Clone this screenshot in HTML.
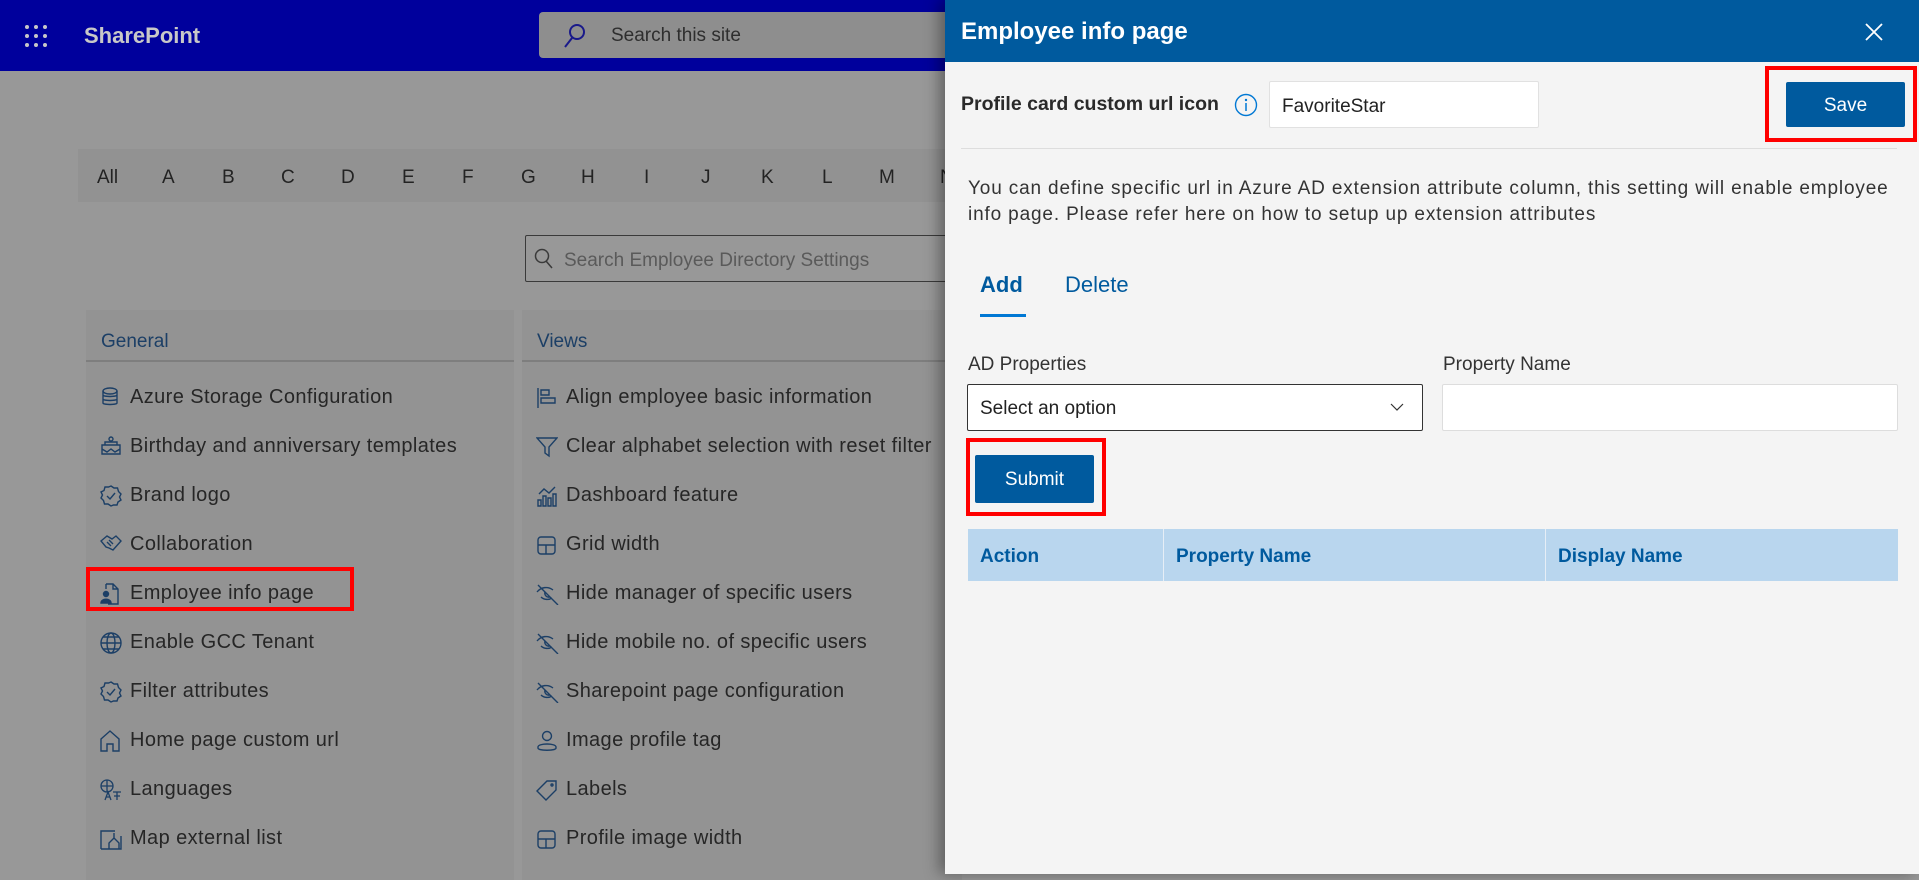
<!DOCTYPE html>
<html><head><meta charset="utf-8">
<style>
*{box-sizing:border-box;margin:0;padding:0}
body{width:1919px;height:874px;overflow:hidden;background:#989898;font-family:"Liberation Sans",sans-serif;position:relative}
.abs{position:absolute}
.top{left:0;top:0;width:1919px;height:71px;background:#00009c}
.sp{left:84px;top:23px;color:#c8c8c8;font-size:22px;font-weight:bold}
.srch{left:539px;top:12px;width:420px;height:46px;background:#8e8e8e;border-radius:4px}
.srch span{position:absolute;left:72px;top:13px;color:#2e2e2e;font-size:19px}
.alpha{left:78px;top:149px;width:880px;height:53px;background:#929292}
.alpha span{position:absolute;top:18px;font-size:19px;color:#232323}
.ss{left:525px;top:235px;width:430px;height:47px;border:1.5px solid #3a3a3a;border-radius:2px}
.ss span{position:absolute;left:38px;top:14px;font-size:19px;color:#5a5a5a}
.card{top:310px;height:570px;background:#939393}
.card h3{position:absolute;left:15px;top:21px;font-size:19px;color:#1c3f66;font-weight:normal}
.card .ul{position:absolute;left:0;right:0;top:50px;height:2px;background:#7e7e7e}
.item{position:absolute;font-size:20px;letter-spacing:0.4px;color:#262626;white-space:nowrap}
.item svg{position:absolute;left:-30px;top:1px}
.red{border:4px solid #f00}
.panel{left:945px;top:0;width:974px;height:874px;background:#f4f4f4;box-shadow:-6px 0 14px rgba(0,0,0,.35)}
.ph{left:0;top:0;width:974px;height:62px;background:#005a9e}
</style></head><body>
<div class="abs top"></div>
<svg class="abs" style="left:24px;top:24px" width="24" height="24"><g fill="#c8c8c8"><circle cx="3" cy="3" r="2"/><circle cx="12" cy="3" r="2"/><circle cx="21" cy="3" r="2"/><circle cx="3" cy="12" r="2"/><circle cx="12" cy="12" r="2"/><circle cx="21" cy="12" r="2"/><circle cx="3" cy="21" r="2"/><circle cx="12" cy="21" r="2"/><circle cx="21" cy="21" r="2"/></g></svg>
<div class="abs sp">SharePoint</div>
<div class="abs srch"><svg style="position:absolute;left:24px;top:11px" width="24" height="26"><circle cx="14" cy="9" r="7" fill="none" stroke="#1a1a8a" stroke-width="2"/><line x1="9" y1="15" x2="2" y2="24" stroke="#1a1a8a" stroke-width="2"/></svg><span>Search this site</span></div>

<div class="abs alpha">
<span style="left:19px">All</span><span style="left:84px">A</span><span style="left:144px">B</span><span style="left:203px">C</span><span style="left:263px">D</span><span style="left:324px">E</span><span style="left:384px">F</span><span style="left:443px">G</span><span style="left:503px">H</span><span style="left:566px">I</span><span style="left:623px">J</span><span style="left:683px">K</span><span style="left:744px">L</span><span style="left:801px">M</span><span style="left:862px">N</span>
</div>
<div class="abs ss"><svg style="position:absolute;left:8px;top:12px" width="20" height="22"><circle cx="8" cy="8" r="6.5" fill="none" stroke="#3a3a3a" stroke-width="1.5"/><line x1="12" y1="13" x2="18" y2="20" stroke="#3a3a3a" stroke-width="1.5"/></svg><span>Search Employee Directory Settings</span></div>

<div class="abs card" style="left:86px;width:428px"><h3>General</h3><div class="ul"></div></div>
<div class="abs card" style="left:522px;width:440px"><h3>Views</h3><div class="ul"></div></div>

<div class="abs red" style="left:86px;top:567px;width:268px;height:44px"></div>

<div class="abs" style="left:130px;top:386px">
<div class="item" style="top:0">Azure Storage Configuration<svg width="20" height="20"><g fill="none" stroke="#1c3f66" stroke-width="1.4"><ellipse cx="10" cy="4" rx="7" ry="3"/><path d="M3 4v12c0 2 14 2 14 0V4M3 8c0 2 14 2 14 0M3 12c0 2 14 2 14 0"/></g></svg></div>
<div class="item" style="top:49px">Birthday and anniversary templates<svg width="22" height="20"><g fill="none" stroke="#1c3f66" stroke-width="1.4"><circle cx="11" cy="3" r="2"/><path d="M2 18h18V9H2zM2 13l5 3 4-3 4 3 5-3M5 9V6h12v3"/></g></svg></div>
<div class="item" style="top:98px">Brand logo<svg width="22" height="22"><g fill="none" stroke="#1c3f66" stroke-width="1.4"><path d="M11 1l3 2 3.5 0 1 3.5 2.5 2.5-1.5 3 1.5 3-3 2-1 3-3.5 0L11 21l-3-2-3.5 0-1-3.5L1 13l1.5-3L1 7l3-1.5 1-3.5 3.5 0z"/><path d="M7 11l3 3 5-6"/></g></svg></div>
<div class="item" style="top:147px">Collaboration<svg width="22" height="20"><g fill="none" stroke="#1c3f66" stroke-width="1.4"><path d="M1 7l6-5 5 3 4-3 5 5-8 9-4-2-3-1z M7 8l4 4M9 6l4 4"/></g></svg></div>
<div class="item" style="top:196px">Employee info page<svg width="20" height="22"><g stroke="#1c3f66" stroke-width="1.4"><path fill="none" d="M6 1h7l5 5v15H8M13 1v5h5M6 1v5"/><circle cx="6" cy="11" r="2.5" fill="#1c3f66"/><path d="M1 20c0-5 10-5 10 0z" fill="#1c3f66"/></g></svg></div>
<div class="item" style="top:245px">Enable GCC Tenant<svg width="22" height="22"><g fill="none" stroke="#1c3f66" stroke-width="1.4"><circle cx="11" cy="11" r="10"/><ellipse cx="11" cy="11" rx="4" ry="10"/><path d="M1 11h20M3 5h16M3 17h16"/></g></svg></div>
<div class="item" style="top:294px">Filter attributes<svg width="22" height="22"><g fill="none" stroke="#1c3f66" stroke-width="1.4"><path d="M11 1l3 2 3.5 0 1 3.5 2.5 2.5-1.5 3 1.5 3-3 2-1 3-3.5 0L11 21l-3-2-3.5 0-1-3.5L1 13l1.5-3L1 7l3-1.5 1-3.5 3.5 0z"/><path d="M7 11l3 3 5-6"/></g></svg></div>
<div class="item" style="top:343px">Home page custom url<svg width="20" height="22"><path fill="none" stroke="#1c3f66" stroke-width="1.4" d="M1 9L10 1l9 8v12h-6v-7H7v7H1z"/></svg></div>
<div class="item" style="top:392px">Languages<svg width="22" height="22"><g fill="none" stroke="#1c3f66" stroke-width="1.3"><circle cx="7" cy="7" r="6"/><path d="M1 7h12M7 1v12M5 21l3-8 3 8M6 18h4M13 13h8M17 13v8M14 17h6"/></g></svg></div>
<div class="item" style="top:441px">Map external list<svg width="22" height="22"><g fill="none" stroke="#1c3f66" stroke-width="1.4"><path d="M1 21V3h14M21 8v13H1M9 21v-6l5-5 5 5v6M14 10V5"/></g></svg></div>
</div>

<div class="abs" style="left:566px;top:386px">
<div class="item" style="top:0">Align employee basic information<svg width="22" height="22"><g fill="none" stroke="#1c3f66" stroke-width="1.4"><path d="M2 1v20M5 3h8v5H5zM5 11h14v5H5z"/></g></svg></div>
<div class="item" style="top:49px">Clear alphabet selection with reset filter<svg width="22" height="22"><path fill="none" stroke="#1c3f66" stroke-width="1.4" d="M1 2h20l-8 9v9l-4-3v-6z"/></svg></div>
<div class="item" style="top:98px">Dashboard feature<svg width="22" height="22"><g fill="none" stroke="#1c3f66" stroke-width="1.4"><path d="M2 15h3v6H2zM7 11h3v10H7zM12 13h3v8h-3zM17 9h3v12h-3zM3 9l5-5 5 4 6-6"/></g></svg></div>
<div class="item" style="top:147px">Grid width<svg width="22" height="22"><g fill="none" stroke="#1c3f66" stroke-width="1.4"><rect x="2" y="3" width="17" height="17" rx="3"/><path d="M2 11h17M10 11v9"/></g></svg></div>
<div class="item" style="top:196px">Hide manager of specific users<svg width="24" height="22"><g fill="none" stroke="#1c3f66" stroke-width="1.4"><path d="M2 2l20 20M1 9c4-5 11-6 16-2M5 14c3 3 8 3 11 1M9 9a4 4 0 0 0 5 5"/></g></svg></div>
<div class="item" style="top:245px">Hide mobile no. of specific users<svg width="24" height="22"><g fill="none" stroke="#1c3f66" stroke-width="1.4"><path d="M2 2l20 20M1 9c4-5 11-6 16-2M5 14c3 3 8 3 11 1M9 9a4 4 0 0 0 5 5"/></g></svg></div>
<div class="item" style="top:294px">Sharepoint page configuration<svg width="24" height="22"><g fill="none" stroke="#1c3f66" stroke-width="1.4"><path d="M2 2l20 20M1 9c4-5 11-6 16-2M5 14c3 3 8 3 11 1M9 9a4 4 0 0 0 5 5"/></g></svg></div>
<div class="item" style="top:343px">Image profile tag<svg width="22" height="22"><g fill="none" stroke="#1c3f66" stroke-width="1.4"><circle cx="11" cy="6" r="4.5"/><path d="M2 17c0-4 18-4 18 0v1c0 3-18 3-18 0z"/></g></svg></div>
<div class="item" style="top:392px">Labels<svg width="22" height="22"><g fill="none" stroke="#1c3f66" stroke-width="1.4"><path d="M1 12L11 2h9v9L10 21z"/><circle cx="16" cy="6" r="1"/></g></svg></div>
<div class="item" style="top:441px">Profile image width<svg width="22" height="22"><g fill="none" stroke="#1c3f66" stroke-width="1.4"><rect x="2" y="3" width="17" height="17" rx="3"/><path d="M2 11h17M10 11v9"/></g></svg></div>
</div>

<div class="abs panel">
<div class="abs ph"></div>
<div class="abs" style="left:16px;top:18px;color:#fff;font-size:24px;font-weight:bold">Employee info page</div>
<svg class="abs" style="left:919px;top:22px" width="20" height="20"><path d="M2 2l16 16M18 2L2 18" stroke="#fff" stroke-width="1.8"/></svg>
<div class="abs" style="left:16px;top:93px;font-size:19.5px;font-weight:bold;color:#2a2a2a">Profile card custom url icon</div>
<svg class="abs" style="left:289px;top:93px" width="24" height="24"><circle cx="12" cy="12" r="10.5" fill="none" stroke="#0078d4" stroke-width="1.4"/><circle cx="12" cy="7" r="1.2" fill="#0078d4"/><path d="M12 10v8" stroke="#0078d4" stroke-width="1.5"/></svg>
<div class="abs" style="left:324px;top:81px;width:270px;height:47px;background:#fff;border:1px solid #e1e1e1;border-radius:2px"><span style="position:absolute;left:12px;top:14px;font-size:19px;color:#222">FavoriteStar</span></div>
<div class="abs red" style="left:820px;top:66px;width:152px;height:76px"></div>
<div class="abs" style="left:841px;top:82px;width:119px;height:45px;background:#005a9e;border-radius:2px;color:#fff;font-size:19px;text-align:center;line-height:47px">Save</div>
<div class="abs" style="left:16px;top:148px;width:936px;height:1px;background:#ddd"></div>
<div class="abs" style="left:23px;top:176px;width:935px;font-size:19px;line-height:26px;color:#333;letter-spacing:0.85px">You can define specific url in Azure AD extension attribute column, this setting will enable employee info page. Please refer here on how to setup up extension attributes</div>
<div class="abs" style="left:35px;top:272px;font-size:22px;color:#005a9e;font-weight:bold">Add</div>
<div class="abs" style="left:120px;top:272px;font-size:22px;color:#005a9e">Delete</div>
<div class="abs" style="left:35px;top:314px;width:46px;height:3px;background:#0078d4"></div>
<div class="abs" style="left:23px;top:354px;font-size:19px;color:#333">AD Properties</div>
<div class="abs" style="left:498px;top:354px;font-size:19px;color:#333">Property Name</div>
<div class="abs" style="left:22px;top:384px;width:456px;height:47px;background:#fff;border:1.5px solid #333;border-radius:2px"><span style="position:absolute;left:12px;top:13px;font-size:19px;color:#222">Select an option</span><svg style="position:absolute;right:18px;top:17px" width="14" height="10"><path d="M1 2l6 6 6-6" fill="none" stroke="#333" stroke-width="1.2"/></svg></div>
<div class="abs" style="left:497px;top:384px;width:456px;height:47px;background:#fff;border:1px solid #ddd;border-radius:2px"></div>
<div class="abs red" style="left:21px;top:438px;width:140px;height:78px"></div>
<div class="abs" style="left:30px;top:455px;width:119px;height:48px;background:#005a9e;border-radius:2px;color:#fff;font-size:19px;text-align:center;line-height:50px">Submit</div>
<div class="abs" style="left:23px;top:529px;width:930px;height:52px;background:#b9d6ee">
<div style="position:absolute;left:195px;top:0;width:1px;height:52px;background:#e6eef6"></div>
<div style="position:absolute;left:577px;top:0;width:1px;height:52px;background:#e6eef6"></div>
<span style="position:absolute;left:12px;top:17px;font-size:19px;color:#005a9e;font-weight:bold">Action</span>
<span style="position:absolute;left:208px;top:17px;font-size:19px;color:#005a9e;font-weight:bold">Property Name</span>
<span style="position:absolute;left:590px;top:17px;font-size:19px;color:#005a9e;font-weight:bold">Display Name</span>
</div>
</div>
</body></html>
